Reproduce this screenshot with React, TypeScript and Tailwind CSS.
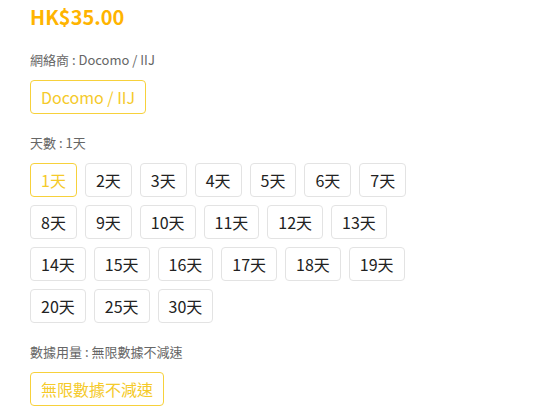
const days = [1, 2, 3, 4, 5, 6, 7, 8, 9, 10, 11, 12, 13, 14, 15, 16, 17, 18, 19, 20, 25, 30];

function Option({ label, active }: { label: string; active?: boolean }) {
  return (
    <button
      className={
        active
          ? "h-[34px] px-[10px] rounded border border-[#f7d13b] text-[16px] text-[#f5ca2a] bg-white"
          : "h-[34px] px-[10px] rounded border border-[#e3e3e3] text-[16px] text-[#222] bg-white"
      }
    >
      {label}
    </button>
  );
}

export default function App() {
  return (
    <div
      className="bg-white min-h-[419px] pl-[30px] pr-4"
      style={{ fontFamily: '"Noto Sans CJK TC", "Noto Sans", sans-serif' }}
    >
      <div className="text-[20px] leading-[34px] font-bold text-[#ffb400]">HK$35.00</div>

      <div className="mt-[17px] text-[13px] leading-[18px] text-[#666]">網絡商 : Docomo / IIJ</div>
      <div className="mt-[11px] flex">
        <Option label="Docomo / IIJ" active />
      </div>

      <div className="mt-[20px] text-[13px] leading-[18px] text-[#666]">天數 : 1天</div>
      <div className="mt-[11px] flex flex-wrap gap-x-[8px] gap-y-2 max-w-[385px]">
        {days.map((d) => (
          <Option key={d} label={`${d}天`} active={d === 1} />
        ))}
      </div>

      <div className="mt-[20px] text-[13px] leading-[18px] text-[#666]">數據用量 : 無限數據不減速</div>
      <div className="mt-[11px] flex">
        <Option label="無限數據不減速" active />
      </div>
    </div>
  );
}
